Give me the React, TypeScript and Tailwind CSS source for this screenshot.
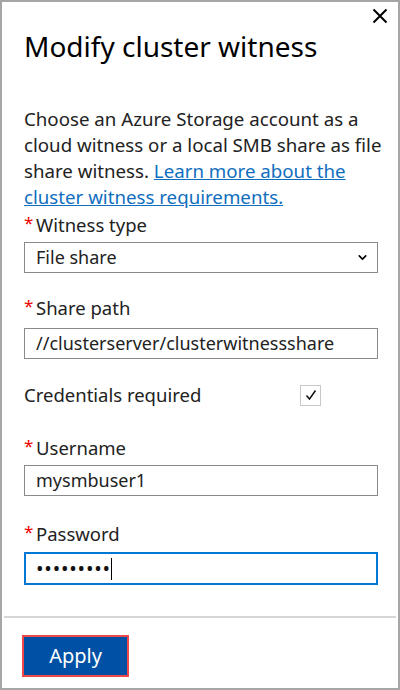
import { ChevronDown } from 'lucide-react';

function Label({ text, required = true }: { text: string; required?: boolean }) {
  return (
    <div className="flex items-start h-[26px] text-[18.5px] leading-[26px] text-[#222]">
      {required && <span className="text-[#e00] text-[17px] leading-[22px] w-[12px]">*</span>}
      <span>{text}</span>
    </div>
  );
}

function Field({ value, focused = false }: { value: React.ReactNode; focused?: boolean }) {
  return (
    <div
      className={
        focused
          ? 'h-[33px] border-2 border-[#0078d4] flex items-center pl-[10px] text-[18px] text-[#111]'
          : 'h-[31px] border border-[#8a8a8a] flex items-center pl-[11px] text-[18px] text-[#222]'
      }
    >
      {value}
    </div>
  );
}

export default function App() {
  return (
    <div
      className="w-[400px] h-[690px] bg-white border-2 border-[#a6a6a6] flex flex-col relative"
      style={{ fontFamily: '"Noto Sans", "Open Sans", sans-serif' }}
    >
      <button className="absolute right-[10px] top-[6px] text-black" aria-label="Close">
        <svg width="16" height="16" viewBox="0 0 16 16" stroke="currentColor" strokeWidth="2">
          <path d="M1.5 1.5 L14.5 14.5 M14.5 1.5 L1.5 14.5" />
        </svg>
      </button>

      <div className="px-[22px] flex-1">
        <h1 className="mt-[25px] text-[28px] leading-[38px] text-black font-normal">Modify cluster witness</h1>

        <p className="mt-[41px] mr-[-12px] text-[18.7px] leading-[26px] text-[#222]">
          Choose an Azure Storage account as a cloud witness or a local SMB share as file share witness.{' '}
          <a href="#" className="text-[#106ebe] underline">Learn more about the cluster witness requirements.</a>
        </p>

        <div className="mt-[2px]">
          <Label text="Witness type" />
        </div>
        <div className="mt-[4px] mr-[-2px] h-[31px] border border-[#8a8a8a] flex items-center justify-between pl-[11px] pr-[8px] text-[18px] text-[#222]">
          <span>File share</span>
          <ChevronDown size={13} strokeWidth={3} className="text-black" />
        </div>

        <div className="mt-[22px]">
          <Label text="Share path" />
        </div>
        <div className="mt-[7px] mr-[-2px]">
          <Field value="//clusterserver/clusterwitnessshare" />
        </div>

        <div className="mt-[24px] flex items-center h-[24px] text-[18.5px] text-[#222]">
          <span className="w-[276px]">Credentials required</span>
          <span className="w-[21px] h-[21px] border border-[#c8c8c8] flex items-center justify-center">
            <svg width="12" height="12" viewBox="0 0 12 12" fill="none" stroke="#111" strokeWidth="1.5">
              <path d="M1.5 6.5 L4.5 10 L10.5 1.5" />
            </svg>
          </span>
        </div>

        <div className="mt-[28px]">
          <Label text="Username" />
        </div>
        <div className="mt-[4px] mr-[-2px]">
          <Field value="mysmbuser1" />
        </div>

        <div className="mt-[25px]">
          <Label text="Password" />
        </div>
        <div className="mt-[5px] mr-[-2px]">
          <Field
            focused
            value={
              <span className="flex items-center">
                <span className="tracking-[0.8px] text-[20px]">•••••••••</span>
                <span className="ml-[0px] w-[1px] h-[22px] bg-black" />
              </span>
            }
          />
        </div>
      </div>

      <div className="h-[2px] bg-[#d6d6d6] mx-[2px]" />
      <div className="px-[20px] pt-[17px] pb-[11px]">
        <button className="w-[107px] h-[42px] bg-[#0051a6] border-2 border-[#f04848] text-white text-[20px]">
          Apply
        </button>
      </div>
    </div>
  );
}
